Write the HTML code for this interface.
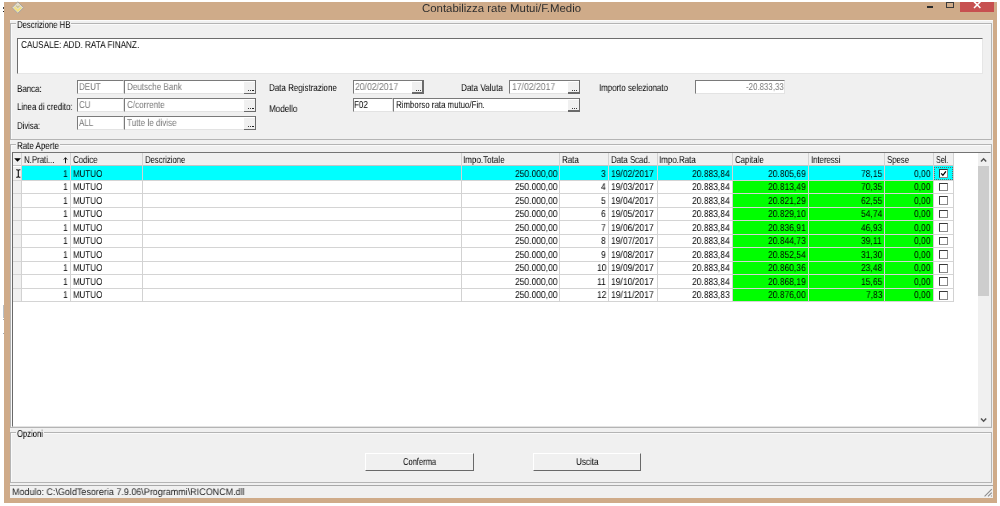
<!DOCTYPE html>
<html><head><meta charset="utf-8"><style>
html,body{margin:0;padding:0;width:1000px;height:506px;overflow:hidden;background:#fff;}
body{position:relative;font-family:"Liberation Sans",sans-serif;}
div,span,svg{position:absolute;box-sizing:border-box;}
.t{white-space:pre;line-height:normal;transform-origin:0 0;text-rendering:geometricPrecision;will-change:transform;}
</style></head><body>
<div style="left:4.00px;top:2.00px;width:993.00px;height:501.00px;background:#cfab89"></div>
<div style="left:10.40px;top:19.50px;width:982.60px;height:478.00px;background:#f0f0f0"></div>
<div style="left:10.40px;top:19.50px;width:982.60px;height:1.30px;background:#fbfbfb"></div>
<span class="t" style="left:421.90px;top:2.90px;font-size:11.3px;color:#2e2e2e;transform:scaleX(1.0093);">Contabilizza rate Mutui/F.Medio</span>
<div style="left:926.80px;top:6.00px;width:6.20px;height:2.00px;background:#2b2b2b"></div>
<div style="left:946.40px;top:2.20px;width:7.60px;height:5.80px;border:1.2px solid #3a3a3a;"></div>
<div style="left:960.00px;top:2.00px;width:34.00px;height:10.00px;background:#c75050"></div>
<svg style="left:972px;top:0px" width="10" height="10"><path d="M2 1.6 L8.4 8 M8.4 1.6 L2 8" stroke="#fff" stroke-width="1.5" fill="none"/></svg>
<div style="left:960.00px;top:0.00px;width:40.00px;height:2.00px;background:#fff"></div>
<div style="left:10.00px;top:23.30px;width:981.60px;height:116.50px;border:1px solid #b4b4b4;"></div>
<div style="left:11.00px;top:24.30px;width:979.60px;height:114.50px;border-top:1px solid #fafafa;border-left:1px solid #fafafa;"></div>
<div style="left:15.60px;top:22.30px;width:55.20px;height:3.00px;background:#f0f0f0"></div>
<span class="t" style="left:16.60px;top:19.70px;font-size:10px;color:#000;transform:scaleX(0.7750);">Descrizione HB</span>
<div style="left:10.00px;top:144.20px;width:981.60px;height:283.50px;border:1px solid #b4b4b4;"></div>
<div style="left:11.00px;top:145.20px;width:979.60px;height:281.50px;border-top:1px solid #fafafa;border-left:1px solid #fafafa;"></div>
<div style="left:15.80px;top:143.20px;width:43.80px;height:3.00px;background:#f0f0f0"></div>
<span class="t" style="left:16.80px;top:140.80px;font-size:10px;color:#000;transform:scaleX(0.7955);">Rate Aperte</span>
<div style="left:10.00px;top:431.80px;width:981.60px;height:51.00px;border:1px solid #b4b4b4;"></div>
<div style="left:11.00px;top:432.80px;width:979.60px;height:49.00px;border-top:1px solid #fafafa;border-left:1px solid #fafafa;"></div>
<div style="left:16.00px;top:430.80px;width:27.80px;height:3.00px;background:#f0f0f0"></div>
<span class="t" style="left:17.00px;top:428.50px;font-size:10px;color:#000;transform:scaleX(0.7670);">Opzioni</span>
<div style="left:16.60px;top:38.20px;width:966.00px;height:35.50px;background:#fff;border-top:1.3px solid #6d6d6d;border-left:1.3px solid #6d6d6d;border-bottom:1px solid #e6e6e6;border-right:1px solid #e6e6e6;"></div>
<span class="t" style="left:20.80px;top:40.30px;font-size:10px;color:#000;transform:scaleX(0.8171);">CAUSALE: ADD. RATA FINANZ.</span>
<div style="left:10.40px;top:485.30px;width:982.60px;height:12.20px;border-top:1px solid #a8a8a8;background:#f0f0f0"></div>
<span class="t" style="left:12.20px;top:486.50px;font-size:9.6px;color:#1e1e1e;transform:scaleX(0.9363);">Modulo: C:\GoldTesoreria 7.9.06\Programmi\RICONCM.dll</span>
<div style="left:365.00px;top:452.70px;width:108.50px;height:18.30px;background:#f0f0f0;border-top:1px solid #fff;border-left:1px solid #fff;border-right:1.3px solid #696969;border-bottom:1.3px solid #696969;"></div>
<span class="t" style="left:402.80px;top:456.50px;font-size:10px;color:#000;transform:scaleX(0.7554);">Conferma</span>
<div style="left:533.40px;top:452.70px;width:108.10px;height:18.30px;background:#f0f0f0;border-top:1px solid #fff;border-left:1px solid #fff;border-right:1.3px solid #696969;border-bottom:1.3px solid #696969;"></div>
<span class="t" style="left:575.80px;top:456.50px;font-size:10px;color:#000;transform:scaleX(0.8058);">Uscita</span>
<span class="t" style="left:16.60px;top:83.90px;font-size:10px;color:#000;transform:scaleX(0.7961);">Banca:</span>
<span class="t" style="left:16.60px;top:102.40px;font-size:10px;color:#000;transform:scaleX(0.7875);">Linea di credito:</span>
<span class="t" style="left:16.60px;top:121.00px;font-size:10px;color:#000;transform:scaleX(0.7700);">Divisa:</span>
<span class="t" style="left:268.60px;top:82.80px;font-size:10px;color:#000;transform:scaleX(0.7972);">Data Registrazione</span>
<span class="t" style="left:268.60px;top:103.50px;font-size:10px;color:#000;transform:scaleX(0.8086);">Modello</span>
<span class="t" style="left:461.00px;top:83.00px;font-size:10px;color:#000;transform:scaleX(0.8109);">Data Valuta</span>
<span class="t" style="left:598.80px;top:83.00px;font-size:10px;color:#000;transform:scaleX(0.7897);">Importo selezionato</span>
<div style="left:77.20px;top:80.40px;width:46.60px;height:13.70px;background:#fff;border-top:1.3px solid #7a7a7a;border-left:1.3px solid #7a7a7a;border-bottom:1px solid #e3e3e3;border-right:1px solid #e3e3e3;"></div>
<div style="left:123.80px;top:80.40px;width:132.20px;height:13.70px;background:#fff;border-top:1.3px solid #7a7a7a;border-left:1.3px solid #7a7a7a;border-bottom:1px solid #e3e3e3;border-right:1px solid #e3e3e3;"></div>
<div style="left:244.20px;top:81.90px;width:10.50px;height:10.90px;background:#f0f0f0;"></div>
<div style="left:254.70px;top:80.40px;width:1.30px;height:13.40px;background:#6a6a6a"></div>
<div style="left:244.20px;top:92.50px;width:11.80px;height:1.30px;background:#6a6a6a"></div>
<div style="left:247.80px;top:89.60px;width:1.50px;height:1.50px;background:#000;border-radius:.5px"></div>
<div style="left:249.90px;top:89.60px;width:1.50px;height:1.50px;background:#000;border-radius:.5px"></div>
<div style="left:252.00px;top:89.60px;width:1.50px;height:1.50px;background:#000;border-radius:.5px"></div>
<span class="t" style="left:79.00px;top:82.20px;font-size:10px;color:#777;transform:scaleX(0.8000);">DEUT</span>
<span class="t" style="left:127.00px;top:82.20px;font-size:10px;color:#777;transform:scaleX(0.8100);">Deutsche Bank</span>
<div style="left:77.20px;top:98.40px;width:46.60px;height:13.70px;background:#fff;border-top:1.3px solid #7a7a7a;border-left:1.3px solid #7a7a7a;border-bottom:1px solid #e3e3e3;border-right:1px solid #e3e3e3;"></div>
<div style="left:123.80px;top:98.40px;width:132.20px;height:13.70px;background:#fff;border-top:1.3px solid #7a7a7a;border-left:1.3px solid #7a7a7a;border-bottom:1px solid #e3e3e3;border-right:1px solid #e3e3e3;"></div>
<div style="left:244.20px;top:99.90px;width:10.50px;height:10.90px;background:#f0f0f0;"></div>
<div style="left:254.70px;top:98.40px;width:1.30px;height:13.40px;background:#6a6a6a"></div>
<div style="left:244.20px;top:110.50px;width:11.80px;height:1.30px;background:#6a6a6a"></div>
<div style="left:247.80px;top:107.60px;width:1.50px;height:1.50px;background:#000;border-radius:.5px"></div>
<div style="left:249.90px;top:107.60px;width:1.50px;height:1.50px;background:#000;border-radius:.5px"></div>
<div style="left:252.00px;top:107.60px;width:1.50px;height:1.50px;background:#000;border-radius:.5px"></div>
<span class="t" style="left:79.00px;top:100.20px;font-size:10px;color:#777;transform:scaleX(0.8000);">CU</span>
<span class="t" style="left:127.00px;top:100.20px;font-size:10px;color:#777;transform:scaleX(0.8100);">C/corrente</span>
<div style="left:77.20px;top:116.40px;width:46.60px;height:13.90px;background:#fff;border-top:1.3px solid #7a7a7a;border-left:1.3px solid #7a7a7a;border-bottom:1px solid #e3e3e3;border-right:1px solid #e3e3e3;"></div>
<div style="left:123.80px;top:116.40px;width:132.20px;height:13.90px;background:#fff;border-top:1.3px solid #7a7a7a;border-left:1.3px solid #7a7a7a;border-bottom:1px solid #e3e3e3;border-right:1px solid #e3e3e3;"></div>
<div style="left:244.20px;top:117.90px;width:10.50px;height:11.10px;background:#f0f0f0;"></div>
<div style="left:254.70px;top:116.40px;width:1.30px;height:13.60px;background:#6a6a6a"></div>
<div style="left:244.20px;top:128.70px;width:11.80px;height:1.30px;background:#6a6a6a"></div>
<div style="left:247.80px;top:125.80px;width:1.50px;height:1.50px;background:#000;border-radius:.5px"></div>
<div style="left:249.90px;top:125.80px;width:1.50px;height:1.50px;background:#000;border-radius:.5px"></div>
<div style="left:252.00px;top:125.80px;width:1.50px;height:1.50px;background:#000;border-radius:.5px"></div>
<span class="t" style="left:79.00px;top:118.20px;font-size:10px;color:#777;transform:scaleX(0.8000);">ALL</span>
<span class="t" style="left:127.00px;top:118.20px;font-size:10px;color:#777;transform:scaleX(0.8100);">Tutte le divise</span>
<div style="left:353.20px;top:80.40px;width:70.50px;height:13.60px;background:#fff;border-top:1.3px solid #7a7a7a;border-left:1.3px solid #7a7a7a;border-bottom:1px solid #e3e3e3;border-right:1px solid #e3e3e3;"></div>
<div style="left:411.90px;top:81.90px;width:10.50px;height:10.80px;background:#f0f0f0;"></div>
<div style="left:422.40px;top:80.40px;width:1.30px;height:13.30px;background:#6a6a6a"></div>
<div style="left:411.90px;top:92.40px;width:11.80px;height:1.30px;background:#6a6a6a"></div>
<div style="left:415.50px;top:89.50px;width:1.50px;height:1.50px;background:#000;border-radius:.5px"></div>
<div style="left:417.60px;top:89.50px;width:1.50px;height:1.50px;background:#000;border-radius:.5px"></div>
<div style="left:419.70px;top:89.50px;width:1.50px;height:1.50px;background:#000;border-radius:.5px"></div>
<span class="t" style="left:355.30px;top:82.20px;font-size:10px;color:#777;transform:scaleX(0.8631);">20/02/2017</span>
<div style="left:509.40px;top:80.40px;width:70.40px;height:13.60px;background:#fff;border-top:1.3px solid #7a7a7a;border-left:1.3px solid #7a7a7a;border-bottom:1px solid #e3e3e3;border-right:1px solid #e3e3e3;"></div>
<div style="left:568.00px;top:81.90px;width:10.50px;height:10.80px;background:#f0f0f0;"></div>
<div style="left:578.50px;top:80.40px;width:1.30px;height:13.30px;background:#6a6a6a"></div>
<div style="left:568.00px;top:92.40px;width:11.80px;height:1.30px;background:#6a6a6a"></div>
<div style="left:571.60px;top:89.50px;width:1.50px;height:1.50px;background:#000;border-radius:.5px"></div>
<div style="left:573.70px;top:89.50px;width:1.50px;height:1.50px;background:#000;border-radius:.5px"></div>
<div style="left:575.80px;top:89.50px;width:1.50px;height:1.50px;background:#000;border-radius:.5px"></div>
<span class="t" style="left:511.50px;top:82.20px;font-size:10px;color:#777;transform:scaleX(0.8631);">17/02/2017</span>
<div style="left:695.00px;top:80.30px;width:90.00px;height:14.00px;background:#fff;border-top:1.3px solid #7a7a7a;border-left:1.3px solid #7a7a7a;border-bottom:1px solid #e3e3e3;border-right:1px solid #e3e3e3;"></div>
<span class="t" style="left:745.50px;top:82.20px;font-size:10px;color:#777;transform:scaleX(0.7908);">-20.833,33</span>
<div style="left:353.20px;top:98.00px;width:39.80px;height:14.00px;background:#fff;border-top:1.3px solid #7a7a7a;border-left:1.3px solid #7a7a7a;border-bottom:1px solid #e3e3e3;border-right:1px solid #e3e3e3;"></div>
<span class="t" style="left:354.20px;top:100.20px;font-size:10px;color:#000;transform:scaleX(0.8000);">F02</span>
<div style="left:393.00px;top:98.00px;width:186.80px;height:14.00px;background:#fff;border-top:1.3px solid #7a7a7a;border-left:1.3px solid #7a7a7a;border-bottom:1px solid #e3e3e3;border-right:1px solid #e3e3e3;"></div>
<div style="left:568.00px;top:99.50px;width:10.50px;height:11.20px;background:#f0f0f0;"></div>
<div style="left:578.50px;top:98.00px;width:1.30px;height:13.70px;background:#6a6a6a"></div>
<div style="left:568.00px;top:110.40px;width:11.80px;height:1.30px;background:#6a6a6a"></div>
<div style="left:571.60px;top:107.50px;width:1.50px;height:1.50px;background:#000;border-radius:.5px"></div>
<div style="left:573.70px;top:107.50px;width:1.50px;height:1.50px;background:#000;border-radius:.5px"></div>
<div style="left:575.80px;top:107.50px;width:1.50px;height:1.50px;background:#000;border-radius:.5px"></div>
<span class="t" style="left:395.80px;top:100.20px;font-size:10px;color:#000;transform:scaleX(0.7863);">Rimborso rata mutuo/Fin.</span>
<div style="left:12.00px;top:152.10px;width:979.20px;height:274.90px;background:#fff;border-top:1.2px solid #747474;border-left:1.3px solid #696969;border-right:1px solid #e3e3e3;border-bottom:1px solid #e3e3e3;"></div>
<div style="left:12.60px;top:153.00px;width:940.70px;height:13.00px;background:#f0f0f0;border-bottom:1px solid #c4c4c4;"></div>
<div style="left:12.60px;top:166.50px;width:9.20px;height:135.20px;background:#f0f0f0"></div>
<div style="left:21.80px;top:166.00px;width:931.50px;height:13.52px;background:#00ffff"></div>
<div style="left:732.60px;top:180.52px;width:200.90px;height:12.52px;background:#00ff00"></div>
<div style="left:732.60px;top:194.04px;width:200.90px;height:12.52px;background:#00ff00"></div>
<div style="left:732.60px;top:207.56px;width:200.90px;height:12.52px;background:#00ff00"></div>
<div style="left:732.60px;top:221.08px;width:200.90px;height:12.52px;background:#00ff00"></div>
<div style="left:732.60px;top:234.60px;width:200.90px;height:12.52px;background:#00ff00"></div>
<div style="left:732.60px;top:248.12px;width:200.90px;height:12.52px;background:#00ff00"></div>
<div style="left:732.60px;top:261.64px;width:200.90px;height:12.52px;background:#00ff00"></div>
<div style="left:732.60px;top:275.16px;width:200.90px;height:12.52px;background:#00ff00"></div>
<div style="left:732.60px;top:288.68px;width:200.90px;height:12.52px;background:#00ff00"></div>
<div style="left:12.60px;top:179.52px;width:940.70px;height:1.00px;background:#d4d4d4"></div>
<div style="left:12.60px;top:193.04px;width:940.70px;height:1.00px;background:#d4d4d4"></div>
<div style="left:12.60px;top:206.56px;width:940.70px;height:1.00px;background:#d4d4d4"></div>
<div style="left:12.60px;top:220.08px;width:940.70px;height:1.00px;background:#d4d4d4"></div>
<div style="left:12.60px;top:233.60px;width:940.70px;height:1.00px;background:#d4d4d4"></div>
<div style="left:12.60px;top:247.12px;width:940.70px;height:1.00px;background:#d4d4d4"></div>
<div style="left:12.60px;top:260.64px;width:940.70px;height:1.00px;background:#d4d4d4"></div>
<div style="left:12.60px;top:274.16px;width:940.70px;height:1.00px;background:#d4d4d4"></div>
<div style="left:12.60px;top:287.68px;width:940.70px;height:1.00px;background:#d4d4d4"></div>
<div style="left:12.60px;top:301.20px;width:940.70px;height:1.00px;background:#d4d4d4"></div>
<div style="left:21.30px;top:153.00px;width:1.00px;height:148.70px;background:#d2d2d2"></div>
<div style="left:70.00px;top:153.00px;width:1.00px;height:148.70px;background:#d2d2d2"></div>
<div style="left:141.90px;top:153.00px;width:1.00px;height:148.70px;background:#d2d2d2"></div>
<div style="left:460.80px;top:153.00px;width:1.00px;height:148.70px;background:#d2d2d2"></div>
<div style="left:558.90px;top:153.00px;width:1.00px;height:148.70px;background:#d2d2d2"></div>
<div style="left:607.90px;top:153.00px;width:1.00px;height:148.70px;background:#d2d2d2"></div>
<div style="left:657.20px;top:153.00px;width:1.00px;height:148.70px;background:#d2d2d2"></div>
<div style="left:732.10px;top:153.00px;width:1.00px;height:148.70px;background:#d2d2d2"></div>
<div style="left:808.00px;top:153.00px;width:1.00px;height:148.70px;background:#d2d2d2"></div>
<div style="left:884.00px;top:153.00px;width:1.00px;height:148.70px;background:#d2d2d2"></div>
<div style="left:933.00px;top:153.00px;width:1.00px;height:148.70px;background:#d2d2d2"></div>
<div style="left:952.80px;top:153.00px;width:1.00px;height:148.70px;background:#d2d2d2"></div>
<span class="t" style="left:24.00px;top:155.10px;font-size:10px;color:#000;transform:scaleX(0.7841);">N.Prati...</span>
<span class="t" style="left:72.90px;top:155.10px;font-size:10px;color:#000;transform:scaleX(0.7897);">Codice</span>
<span class="t" style="left:144.70px;top:155.10px;font-size:10px;color:#000;transform:scaleX(0.7713);">Descrizione</span>
<span class="t" style="left:463.40px;top:155.10px;font-size:10px;color:#000;transform:scaleX(0.8046);">Impo.Totale</span>
<span class="t" style="left:562.00px;top:155.10px;font-size:10px;color:#000;transform:scaleX(0.7991);">Rata</span>
<span class="t" style="left:610.90px;top:155.10px;font-size:10px;color:#000;transform:scaleX(0.7887);">Data Scad.</span>
<span class="t" style="left:659.20px;top:155.10px;font-size:10px;color:#000;transform:scaleX(0.7974);">Impo.Rata</span>
<span class="t" style="left:735.10px;top:155.10px;font-size:10px;color:#000;transform:scaleX(0.7820);">Capitale</span>
<span class="t" style="left:810.90px;top:155.10px;font-size:10px;color:#000;transform:scaleX(0.7778);">Interessi</span>
<span class="t" style="left:886.80px;top:155.10px;font-size:10px;color:#000;transform:scaleX(0.7795);">Spese</span>
<span class="t" style="left:935.70px;top:155.10px;font-size:10px;color:#000;transform:scaleX(0.7130);">Sel.</span>
<svg style="left:14px;top:157.8px" width="8" height="5"><path d="M0.2 0.2 L6.9 0.2 L3.55 3.8 Z" fill="#000"/></svg>
<svg style="left:63px;top:157px" width="6" height="8"><path d="M2.5 6.2 V0.8 M0.8 2.6 L2.5 0.7 L4.2 2.6" stroke="#111" stroke-width="1" fill="none"/></svg>
<svg style="left:14.5px;top:168.6px" width="7" height="10"><path d="M1.2 0.7 Q3.3 0.5 3.3 2 V7 Q3.3 8.5 1.2 8.3 M5.4 0.7 Q3.3 0.5 3.3 2 M3.3 7 Q3.3 8.5 5.4 8.3" stroke="#111" stroke-width="1.1" fill="none"/></svg>
<span class="t" style="left:62.69px;top:168.50px;font-size:10px;color:#000;transform:scaleX(0.8492);">1</span>
<span class="t" style="left:73.00px;top:168.50px;font-size:10px;color:#000;transform:scaleX(0.7967);">MUTUO</span>
<span class="t" style="left:514.60px;top:168.50px;font-size:10px;color:#000;transform:scaleX(0.8492);">250.000,00</span>
<span class="t" style="left:601.29px;top:168.50px;font-size:10px;color:#000;transform:scaleX(0.8492);">3</span>
<span class="t" style="left:610.90px;top:168.50px;font-size:10px;color:#000;transform:scaleX(0.8531);">19/02/2017</span>
<span class="t" style="left:692.11px;top:168.50px;font-size:10px;color:#000;transform:scaleX(0.8492);">20.883,84</span>
<span class="t" style="left:768.41px;top:168.50px;font-size:10px;color:#000;transform:scaleX(0.8492);">20.805,69</span>
<span class="t" style="left:860.83px;top:168.50px;font-size:10px;color:#000;transform:scaleX(0.8492);">78,15</span>
<span class="t" style="left:914.18px;top:168.50px;font-size:10px;color:#000;transform:scaleX(0.8492);">0,00</span>
<div style="left:938.80px;top:169.10px;width:8.80px;height:8.80px;background:#fff;border-top:1.5px solid #3a3a3a;border-left:1.5px solid #3a3a3a;border-right:1.2px solid #8a8a8a;border-bottom:1.2px solid #8a8a8a;"></div>
<svg style="left:938.8px;top:169.10px" width="9" height="9"><path d="M2.2 4.3 L3.9 6.3 L6.9 2.3" stroke="#000" stroke-width="1.3" fill="none"/></svg>
<span class="t" style="left:62.69px;top:182.02px;font-size:10px;color:#000;transform:scaleX(0.8492);">1</span>
<span class="t" style="left:73.00px;top:182.02px;font-size:10px;color:#000;transform:scaleX(0.7967);">MUTUO</span>
<span class="t" style="left:514.60px;top:182.02px;font-size:10px;color:#000;transform:scaleX(0.8492);">250.000,00</span>
<span class="t" style="left:601.29px;top:182.02px;font-size:10px;color:#000;transform:scaleX(0.8492);">4</span>
<span class="t" style="left:610.90px;top:182.02px;font-size:10px;color:#000;transform:scaleX(0.8531);">19/03/2017</span>
<span class="t" style="left:692.11px;top:182.02px;font-size:10px;color:#000;transform:scaleX(0.8492);">20.883,84</span>
<span class="t" style="left:768.41px;top:182.02px;font-size:10px;color:#000;transform:scaleX(0.8492);">20.813,49</span>
<span class="t" style="left:860.83px;top:182.02px;font-size:10px;color:#000;transform:scaleX(0.8492);">70,35</span>
<span class="t" style="left:914.18px;top:182.02px;font-size:10px;color:#000;transform:scaleX(0.8492);">0,00</span>
<div style="left:938.80px;top:182.62px;width:8.80px;height:8.80px;background:#fff;border-top:1.5px solid #3a3a3a;border-left:1.5px solid #3a3a3a;border-right:1.2px solid #8a8a8a;border-bottom:1.2px solid #8a8a8a;"></div>
<span class="t" style="left:62.69px;top:195.54px;font-size:10px;color:#000;transform:scaleX(0.8492);">1</span>
<span class="t" style="left:73.00px;top:195.54px;font-size:10px;color:#000;transform:scaleX(0.7967);">MUTUO</span>
<span class="t" style="left:514.60px;top:195.54px;font-size:10px;color:#000;transform:scaleX(0.8492);">250.000,00</span>
<span class="t" style="left:601.29px;top:195.54px;font-size:10px;color:#000;transform:scaleX(0.8492);">5</span>
<span class="t" style="left:610.90px;top:195.54px;font-size:10px;color:#000;transform:scaleX(0.8531);">19/04/2017</span>
<span class="t" style="left:692.11px;top:195.54px;font-size:10px;color:#000;transform:scaleX(0.8492);">20.883,84</span>
<span class="t" style="left:768.41px;top:195.54px;font-size:10px;color:#000;transform:scaleX(0.8492);">20.821,29</span>
<span class="t" style="left:860.83px;top:195.54px;font-size:10px;color:#000;transform:scaleX(0.8492);">62,55</span>
<span class="t" style="left:914.18px;top:195.54px;font-size:10px;color:#000;transform:scaleX(0.8492);">0,00</span>
<div style="left:938.80px;top:196.14px;width:8.80px;height:8.80px;background:#fff;border-top:1.5px solid #3a3a3a;border-left:1.5px solid #3a3a3a;border-right:1.2px solid #8a8a8a;border-bottom:1.2px solid #8a8a8a;"></div>
<span class="t" style="left:62.69px;top:209.06px;font-size:10px;color:#000;transform:scaleX(0.8492);">1</span>
<span class="t" style="left:73.00px;top:209.06px;font-size:10px;color:#000;transform:scaleX(0.7967);">MUTUO</span>
<span class="t" style="left:514.60px;top:209.06px;font-size:10px;color:#000;transform:scaleX(0.8492);">250.000,00</span>
<span class="t" style="left:601.29px;top:209.06px;font-size:10px;color:#000;transform:scaleX(0.8492);">6</span>
<span class="t" style="left:610.90px;top:209.06px;font-size:10px;color:#000;transform:scaleX(0.8531);">19/05/2017</span>
<span class="t" style="left:692.11px;top:209.06px;font-size:10px;color:#000;transform:scaleX(0.8492);">20.883,84</span>
<span class="t" style="left:768.41px;top:209.06px;font-size:10px;color:#000;transform:scaleX(0.8492);">20.829,10</span>
<span class="t" style="left:860.83px;top:209.06px;font-size:10px;color:#000;transform:scaleX(0.8492);">54,74</span>
<span class="t" style="left:914.18px;top:209.06px;font-size:10px;color:#000;transform:scaleX(0.8492);">0,00</span>
<div style="left:938.80px;top:209.66px;width:8.80px;height:8.80px;background:#fff;border-top:1.5px solid #3a3a3a;border-left:1.5px solid #3a3a3a;border-right:1.2px solid #8a8a8a;border-bottom:1.2px solid #8a8a8a;"></div>
<span class="t" style="left:62.69px;top:222.58px;font-size:10px;color:#000;transform:scaleX(0.8492);">1</span>
<span class="t" style="left:73.00px;top:222.58px;font-size:10px;color:#000;transform:scaleX(0.7967);">MUTUO</span>
<span class="t" style="left:514.60px;top:222.58px;font-size:10px;color:#000;transform:scaleX(0.8492);">250.000,00</span>
<span class="t" style="left:601.29px;top:222.58px;font-size:10px;color:#000;transform:scaleX(0.8492);">7</span>
<span class="t" style="left:610.90px;top:222.58px;font-size:10px;color:#000;transform:scaleX(0.8531);">19/06/2017</span>
<span class="t" style="left:692.11px;top:222.58px;font-size:10px;color:#000;transform:scaleX(0.8492);">20.883,84</span>
<span class="t" style="left:768.41px;top:222.58px;font-size:10px;color:#000;transform:scaleX(0.8492);">20.836,91</span>
<span class="t" style="left:860.83px;top:222.58px;font-size:10px;color:#000;transform:scaleX(0.8492);">46,93</span>
<span class="t" style="left:914.18px;top:222.58px;font-size:10px;color:#000;transform:scaleX(0.8492);">0,00</span>
<div style="left:938.80px;top:223.18px;width:8.80px;height:8.80px;background:#fff;border-top:1.5px solid #3a3a3a;border-left:1.5px solid #3a3a3a;border-right:1.2px solid #8a8a8a;border-bottom:1.2px solid #8a8a8a;"></div>
<span class="t" style="left:62.69px;top:236.10px;font-size:10px;color:#000;transform:scaleX(0.8492);">1</span>
<span class="t" style="left:73.00px;top:236.10px;font-size:10px;color:#000;transform:scaleX(0.7967);">MUTUO</span>
<span class="t" style="left:514.60px;top:236.10px;font-size:10px;color:#000;transform:scaleX(0.8492);">250.000,00</span>
<span class="t" style="left:601.29px;top:236.10px;font-size:10px;color:#000;transform:scaleX(0.8492);">8</span>
<span class="t" style="left:610.90px;top:236.10px;font-size:10px;color:#000;transform:scaleX(0.8531);">19/07/2017</span>
<span class="t" style="left:692.11px;top:236.10px;font-size:10px;color:#000;transform:scaleX(0.8492);">20.883,84</span>
<span class="t" style="left:768.41px;top:236.10px;font-size:10px;color:#000;transform:scaleX(0.8492);">20.844,73</span>
<span class="t" style="left:861.47px;top:236.10px;font-size:10px;color:#000;transform:scaleX(0.8492);">39,11</span>
<span class="t" style="left:914.18px;top:236.10px;font-size:10px;color:#000;transform:scaleX(0.8492);">0,00</span>
<div style="left:938.80px;top:236.70px;width:8.80px;height:8.80px;background:#fff;border-top:1.5px solid #3a3a3a;border-left:1.5px solid #3a3a3a;border-right:1.2px solid #8a8a8a;border-bottom:1.2px solid #8a8a8a;"></div>
<span class="t" style="left:62.69px;top:249.62px;font-size:10px;color:#000;transform:scaleX(0.8492);">1</span>
<span class="t" style="left:73.00px;top:249.62px;font-size:10px;color:#000;transform:scaleX(0.7967);">MUTUO</span>
<span class="t" style="left:514.60px;top:249.62px;font-size:10px;color:#000;transform:scaleX(0.8492);">250.000,00</span>
<span class="t" style="left:601.29px;top:249.62px;font-size:10px;color:#000;transform:scaleX(0.8492);">9</span>
<span class="t" style="left:610.90px;top:249.62px;font-size:10px;color:#000;transform:scaleX(0.8531);">19/08/2017</span>
<span class="t" style="left:692.11px;top:249.62px;font-size:10px;color:#000;transform:scaleX(0.8492);">20.883,84</span>
<span class="t" style="left:768.41px;top:249.62px;font-size:10px;color:#000;transform:scaleX(0.8492);">20.852,54</span>
<span class="t" style="left:860.83px;top:249.62px;font-size:10px;color:#000;transform:scaleX(0.8492);">31,30</span>
<span class="t" style="left:914.18px;top:249.62px;font-size:10px;color:#000;transform:scaleX(0.8492);">0,00</span>
<div style="left:938.80px;top:250.22px;width:8.80px;height:8.80px;background:#fff;border-top:1.5px solid #3a3a3a;border-left:1.5px solid #3a3a3a;border-right:1.2px solid #8a8a8a;border-bottom:1.2px solid #8a8a8a;"></div>
<span class="t" style="left:62.69px;top:263.14px;font-size:10px;color:#000;transform:scaleX(0.8492);">1</span>
<span class="t" style="left:73.00px;top:263.14px;font-size:10px;color:#000;transform:scaleX(0.7967);">MUTUO</span>
<span class="t" style="left:514.60px;top:263.14px;font-size:10px;color:#000;transform:scaleX(0.8492);">250.000,00</span>
<span class="t" style="left:596.57px;top:263.14px;font-size:10px;color:#000;transform:scaleX(0.8492);">10</span>
<span class="t" style="left:610.90px;top:263.14px;font-size:10px;color:#000;transform:scaleX(0.8531);">19/09/2017</span>
<span class="t" style="left:692.11px;top:263.14px;font-size:10px;color:#000;transform:scaleX(0.8492);">20.883,84</span>
<span class="t" style="left:768.41px;top:263.14px;font-size:10px;color:#000;transform:scaleX(0.8492);">20.860,36</span>
<span class="t" style="left:860.83px;top:263.14px;font-size:10px;color:#000;transform:scaleX(0.8492);">23,48</span>
<span class="t" style="left:914.18px;top:263.14px;font-size:10px;color:#000;transform:scaleX(0.8492);">0,00</span>
<div style="left:938.80px;top:263.74px;width:8.80px;height:8.80px;background:#fff;border-top:1.5px solid #3a3a3a;border-left:1.5px solid #3a3a3a;border-right:1.2px solid #8a8a8a;border-bottom:1.2px solid #8a8a8a;"></div>
<span class="t" style="left:62.69px;top:276.66px;font-size:10px;color:#000;transform:scaleX(0.8492);">1</span>
<span class="t" style="left:73.00px;top:276.66px;font-size:10px;color:#000;transform:scaleX(0.7967);">MUTUO</span>
<span class="t" style="left:514.60px;top:276.66px;font-size:10px;color:#000;transform:scaleX(0.8492);">250.000,00</span>
<span class="t" style="left:597.17px;top:276.66px;font-size:10px;color:#000;transform:scaleX(0.8492);">11</span>
<span class="t" style="left:610.90px;top:276.66px;font-size:10px;color:#000;transform:scaleX(0.8531);">19/10/2017</span>
<span class="t" style="left:692.11px;top:276.66px;font-size:10px;color:#000;transform:scaleX(0.8492);">20.883,84</span>
<span class="t" style="left:768.41px;top:276.66px;font-size:10px;color:#000;transform:scaleX(0.8492);">20.868,19</span>
<span class="t" style="left:860.83px;top:276.66px;font-size:10px;color:#000;transform:scaleX(0.8492);">15,65</span>
<span class="t" style="left:914.18px;top:276.66px;font-size:10px;color:#000;transform:scaleX(0.8492);">0,00</span>
<div style="left:938.80px;top:277.26px;width:8.80px;height:8.80px;background:#fff;border-top:1.5px solid #3a3a3a;border-left:1.5px solid #3a3a3a;border-right:1.2px solid #8a8a8a;border-bottom:1.2px solid #8a8a8a;"></div>
<span class="t" style="left:62.69px;top:290.18px;font-size:10px;color:#000;transform:scaleX(0.8492);">1</span>
<span class="t" style="left:73.00px;top:290.18px;font-size:10px;color:#000;transform:scaleX(0.7967);">MUTUO</span>
<span class="t" style="left:514.60px;top:290.18px;font-size:10px;color:#000;transform:scaleX(0.8492);">250.000,00</span>
<span class="t" style="left:596.57px;top:290.18px;font-size:10px;color:#000;transform:scaleX(0.8492);">12</span>
<span class="t" style="left:610.90px;top:290.18px;font-size:10px;color:#000;transform:scaleX(0.8661);">19/11/2017</span>
<span class="t" style="left:692.11px;top:290.18px;font-size:10px;color:#000;transform:scaleX(0.8492);">20.883,83</span>
<span class="t" style="left:768.41px;top:290.18px;font-size:10px;color:#000;transform:scaleX(0.8492);">20.876,00</span>
<span class="t" style="left:865.58px;top:290.18px;font-size:10px;color:#000;transform:scaleX(0.8492);">7,83</span>
<span class="t" style="left:914.18px;top:290.18px;font-size:10px;color:#000;transform:scaleX(0.8492);">0,00</span>
<div style="left:938.80px;top:290.78px;width:8.80px;height:8.80px;background:#fff;border-top:1.5px solid #3a3a3a;border-left:1.5px solid #3a3a3a;border-right:1.2px solid #8a8a8a;border-bottom:1.2px solid #8a8a8a;"></div>
<div style="left:933.80px;top:166.80px;width:19.50px;height:12.92px;border:1px dotted #666"></div>
<div style="left:977.80px;top:153.00px;width:13.30px;height:273.10px;background:#f0f0f0"></div>
<div style="left:977.80px;top:166.10px;width:11.20px;height:129.80px;background:#cdcdcd"></div>
<svg style="left:980px;top:157px" width="8" height="6"><path d="M1 4.6 L3.6 1.8 L6.2 4.6" stroke="#555" stroke-width="1.5" fill="none"/></svg>
<svg style="left:980px;top:416.5px" width="8" height="6"><path d="M1 1.4 L3.6 4.2 L6.2 1.4" stroke="#555" stroke-width="1.5" fill="none"/></svg>
<svg style="left:980px;top:485px" width="13" height="13"><path d="M4.6 11.4 L11.8 4.2 M8 11.4 L11.8 7.6 M11 11.4 L11.8 10.6" stroke="#8c8c8c" stroke-width="1.1" fill="none"/></svg>
<svg style="left:11px;top:1px" width="14" height="14"><path d="M6.8 0.8 L12.6 6.6 L6.8 12.4 L1 6.6 Z" fill="#e4dccb" stroke="#a8a49c" stroke-width="1"/><path d="M3.4 6.4 L6.8 9.8 L10.2 6.4" stroke="#f4e27a" stroke-width="1.8" fill="none"/><path d="M5 4.6 L6.8 6.4 L8.6 4.6" stroke="#c8c090" stroke-width="1.2" fill="none"/></svg>
<div style="left:3.00px;top:7.00px;width:1.20px;height:1.60px;background:#444"></div>
<div style="left:3.00px;top:305.00px;width:0.90px;height:13.00px;background:#b8c0c8"></div>
<div style="left:3.00px;top:319.00px;width:0.90px;height:1.00px;background:#a0a8b0"></div>
<div style="left:3.00px;top:333.00px;width:0.90px;height:1.00px;background:#a0a8b0"></div>
<div style="left:3.00px;top:11.00px;width:1.20px;height:1.20px;background:#222"></div>
</body></html>
